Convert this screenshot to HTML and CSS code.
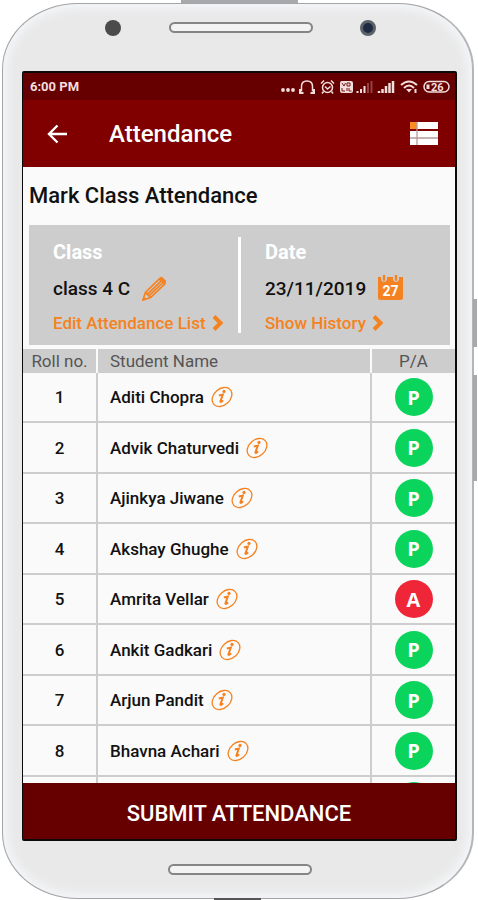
FILE: index.html
```html
<!DOCTYPE html>
<html lang="en">
<head>
    <meta charset="UTF-8">
    <meta name="viewport" content="width=device-width, initial-scale=1.0">
    <title>Attendance</title>
    <link rel="stylesheet" href="styles.css">
</head>
<body>

    <!-- shared icons -->
    <svg class="sprite" aria-hidden="true">
        <symbol id="info" viewBox="0 0 22 22">
            <ellipse cx="11" cy="11" rx="11" ry="8.2" transform="rotate(-42 11 11)" fill="none" stroke="currentColor" stroke-width="1.3"/>
            <path d="M7.800 9.500 11.800 8.600 9.400 15.500Q9.800 16.800 12.200 14.400" fill="none" stroke="currentColor" stroke-width="2"/>
            <circle cx="13" cy="5.400" r="1.600" fill="currentColor"/>
        </symbol>
        <symbol id="chevron" viewBox="0 0 12 16">
            <path d="M2 1.500 8.500 8 2 14.500" fill="none" stroke="currentColor" stroke-width="4"/>
        </symbol>
    </svg>

    <div class="phone">
        <span class="power-key"></span>
        <span class="side-key side-key-small"></span>
        <span class="side-key side-key-large"></span>
        <span class="base-port"></span>

        <div class="bezel-top">
            <span class="sensor"></span>
            <span class="speaker"></span>
            <span class="camera"></span>
        </div>

        <div class="screen">
            <div class="status-bar">
                <span class="time">6:00 PM</span>
                <svg class="status-icons" width="170" height="16" viewBox="0 0 170 16" fill="none" stroke="#f3dede" stroke-width="1.5">
                    <g fill="#f3dede" stroke="none">
                        <circle cx="3" cy="11" r="1.900"/><circle cx="8" cy="11" r="1.900"/><circle cx="13" cy="11" r="1.900"/>
                    </g>
                    <path d="M21.500 12.500V7.500Q21.500 2 27 2T32.500 7.500V12.500"/>
                    <path d="M20 10V14H23.500M34 10V14H30.500" stroke-width="2"/>
                    <circle cx="47.500" cy="8.500" r="5"/>
                    <path d="M41 4.500 44 1.500M54 4.500 51 1.500M43.500 12.500 42 14.500M51.500 12.500 53 14.500M45 7.500 47.500 10 50.500 7.500"/>
                    <rect x="60" y="2" width="13" height="12" rx="2" fill="#f3dede" stroke="none"/>
                    <path d="M62 4 64 7 65.500 4M67 4H70V7H67ZM62 9V12H65M67 9V12M69 9V12H71.500" stroke="#771818" stroke-width="1"/>
                    <path d="M77.500 14V12M81 14V10M84.500 14V7" stroke-width="2"/>
                    <path d="M88 14V4M91.500 14V2" stroke="#964040" stroke-width="2"/>
                    <path d="M99 14V12M102.500 14V10M106 14V7M109.500 14V4M113 14V2" stroke-width="2.500"/>
                    <path d="M121 6Q129 -1 137 6M124 9Q129 4 134 9" stroke-width="2"/>
                    <path d="M126 10H132L129 13.500Z" fill="#f3dede" stroke="none"/>
                    <path d="M135.500 10V14" stroke-width="2"/>
                    <rect x="144" y="2.500" width="25" height="10.500" rx="5.200"/>
                    <path d="M148 5.500V10" stroke-width="3"/>
                    <text class="battery-text" x="151" y="12">26</text>
                </svg>
            </div>

            <header class="app-bar">
                <button class="icon-btn back" type="button" aria-label="Back">
                    <svg width="20" height="20" viewBox="0 0 20 20" fill="none" stroke="#fff" stroke-width="2.400">
                        <path d="M20 10H2M10.500 1.500 2 10 10.500 18.500"/>
                    </svg>
                </button>
                <h1>Attendance</h1>
                <button class="icon-btn" type="button" aria-label="Attendance sheet">
                    <svg width="28" height="24" viewBox="0 0 28 24">
                        <path d="M7 0H28V7H7ZM0 9H28V23H0Z" fill="#fff"/>
                        <path d="M0 0H7V7H0Z" fill="#fb8c1e"/>
                        <path d="M7 0V23M0 16H28" stroke="#b79a9a" stroke-width="1.300"/>
                    </svg>
                </button>
            </header>

            <main class="content">
                <h2>Mark Class Attendance</h2>

                <section class="summary">
                    <div class="summary-item">
                        <h3>Class</h3>
                        <div class="value">
                            <span>class 4 C</span>
                            <button class="icon-btn" type="button" aria-label="Change class">
                                <svg width="25" height="25" viewBox="0 0 26 26" fill="none" stroke="#f58220" stroke-width="1.700">
                                    <path d="M1 25 3.500 17 18 3 23.500 8.500 9 22.500ZM3.500 17 9 22.500M6 18.500 19.500 5.500M7.800 20.200 21.500 7"/>
                                    <path d="M18 2Q19.500 0 21.500 1.500L24.500 4.500Q26 6.500 24 8.500Z" fill="#f58220" stroke="none"/>
                                    <path d="M1 25 2 21.500 4.500 24Z" fill="#f58220" stroke="none"/>
                                </svg>
                            </button>
                        </div>
                        <a href="#edit">Edit Attendance List <svg class="chevron"><use href="#chevron"/></svg></a>
                    </div>
                    <div class="summary-item">
                        <h3>Date</h3>
                        <div class="value">
                            <span>23/11/2019</span>
                            <button class="icon-btn" type="button" aria-label="Change date">
                                <svg width="25" height="26" viewBox="0 0 25 26">
                                    <path d="M0 2H25V23Q25 25 22.500 25H2.500Q0 25 0 23Z" fill="#f58220"/>
                                    <path d="M3 0H9V5Q6 9 3 5ZM15 0H21V5Q18 9 15 5Z" fill="#cdcdcd"/>
                                    <path d="M4.800 0H7.200V5Q6 7 4.800 5ZM16.800 0H19.200V5Q18 7 16.800 5Z" fill="#f58220"/>
                                    <text class="calendar-text" x="12.500" y="21">27</text>
                                </svg>
                            </button>
                        </div>
                        <a href="#history">Show History <svg class="chevron"><use href="#chevron"/></svg></a>
                    </div>
                </section>

                <div class="list">
                    <table>
                        <thead>
                            <tr>
                                <th class="roll">Roll no.</th>
                                <th class="name">Student Name</th>
                                <th class="mark">P/A</th>
                            </tr>
                        </thead>
                        <tbody id="students"></tbody>
                    </table>
                </div>
            </main>

            <button class="submit" type="button">SUBMIT ATTENDANCE</button>
        </div>

        <div class="bezel-bottom">
            <span class="speaker"></span>
        </div>
    </div>

    <script src="script.js"></script>
</body>
</html>
```

FILE: styles.css
```css
* {
    margin: 0;
    padding: 0;
    box-sizing: border-box;
}
body {
    height: 100vh;
    padding: 3px 4px 1px 2px;
    font-family: Roboto, "Liberation Sans", sans-serif;
    font-weight: 500;
    color: #111;
    background: #fff;
    overflow: hidden;
}
button {
    font: inherit;
    border: none;
    cursor: pointer;
}
.sprite {
    position: absolute;
    width: 0;
    height: 0;
}

/* phone body */
.phone {
    position: relative;
    height: 100%;
    padding: 0 15px 0 19px;
    display: flex;
    flex-direction: column;
    background: #e9e9e9;
    border: 1px solid #a3a5a7;
    border-right: 2px solid #b4b5b7;
    border-radius: 76px / 66px;
    box-shadow: inset 0 0 8px 5px #f3f5f8;
}
.power-key,
.side-key,
.base-port {
    position: absolute;
    background: #a9a9ab;
}
.power-key {
    top: -4px;
    left: 38%;
    width: 25%;
    height: 3px;
}
.side-key {
    right: -5px;
    width: 4px;
}
.side-key-small {
    top: 295px;
    height: 48px;
}
.side-key-large {
    top: 371px;
    height: 106px;
}
.base-port {
    bottom: -2px;
    left: 45%;
    width: 10%;
    height: 2px;
    background: #555;
}
.bezel-top {
    height: 67px;
    padding: 0 81px 20px 83px;
    display: flex;
    flex-shrink: 0;
    justify-content: space-between;
    align-items: center;
}
.bezel-bottom {
    height: 57px;
    display: flex;
    flex-shrink: 0;
    justify-content: center;
    align-items: center;
}
.sensor,
.camera {
    width: 16px;
    height: 16px;
    border-radius: 50%;
    background: #4b4b4b;
}
.camera {
    background: #1d2a42;
    border: 3px solid #5b6168;
}
.speaker {
    width: 144px;
    height: 11px;
    background: #f3f3f3;
    border: 2px solid #858585;
    border-radius: 6px;
}

/* screen */
.screen {
    flex: 1;
    min-height: 0;
    display: flex;
    flex-direction: column;
    background: #fafafa;
    border: 2px solid #0b0b0b;
    border-left-width: 1px;
    border-radius: 2px;
    overflow: hidden;
}
.status-bar {
    height: 27px;
    padding: 0 5px 0 7px;
    display: flex;
    flex-shrink: 0;
    justify-content: space-between;
    align-items: center;
    background: #660000;
}
.time {
    font-size: 13px;
    font-weight: 700;
    color: #f3dede;
}
.battery-text {
    font-size: 11px;
    font-weight: 700;
    fill: #f3dede;
    stroke: none;
}
.app-bar {
    height: 67px;
    padding: 0 17px 0 24px;
    display: flex;
    flex-shrink: 0;
    align-items: center;
    background: #800000;
    color: #fff;
}
.app-bar h1 {
    flex: 1;
    padding-left: 42px;
    font-size: 24px;
    font-weight: 500;
}
.icon-btn {
    display: flex;
    background: none;
    color: #f58220;
}
.content {
    flex: 1;
    min-height: 0;
    display: flex;
    flex-direction: column;
}
h2 {
    padding-left: 6px;
    font-size: 22px;
    font-weight: 500;
    line-height: 58px;
}

/* class and date card */
.summary {
    margin: 0 5px 4px 6px;
    padding: 12px 0;
    display: flex;
    background: #cdcdcd;
}
.summary-item {
    flex: 1;
    padding-left: 24px;
}
.summary-item + .summary-item {
    border-left: 3px solid #fff;
}
.summary-item h3 {
    font-size: 20px;
    font-weight: 700;
    line-height: 30px;
    color: #fff;
}
.summary-item .value {
    height: 42px;
    display: flex;
    align-items: center;
    gap: 12px;
    font-size: 19px;
}
.summary-item a {
    height: 24px;
    padding-top: 4px;
    display: flex;
    align-items: center;
    gap: 6px;
    font-size: 17px;
    color: #f58220;
    text-decoration: none;
    white-space: nowrap;
}
.chevron {
    width: 12px;
    height: 16px;
}
.calendar-text {
    font-size: 14px;
    font-weight: 700;
    fill: #fff;
    text-anchor: middle;
}

/* student list */
.list {
    flex: 1;
    min-height: 0;
    overflow: hidden;
}
table {
    width: 100%;
    table-layout: fixed;
    border-collapse: separate;
    border-spacing: 0;
}
th {
    height: 24px;
    font-size: 17px;
    font-weight: 400;
    color: #555;
    background: #cdcdcd;
}
th + th {
    border-left: 2px solid #fafafa;
}
.roll {
    width: 73px;
}
.name {
    padding-left: 12px;
    text-align: left;
}
.mark {
    width: 85px;
}
td {
    height: 50px;
    font-size: 17px;
    text-align: center;
    border-bottom: 2px solid #cdcdcd;
}
tr:nth-child(even) td {
    height: 51px;
}
td + td {
    border-left: 2px solid #cdcdcd;
}
td.name {
    text-align: left;
}
.student {
    display: flex;
    align-items: center;
    gap: 7px;
}
.info-icon {
    width: 22px;
    height: 22px;
}
.badge {
    width: 38px;
    height: 38px;
    display: block;
    margin: 0 auto;
    border-radius: 50%;
    font-family: "Open Sans", sans-serif;
    font-size: 20px;
    font-weight: 700;
    color: #fff;
    background: #0bd45c;
}
.badge.absent {
    background: #ee2637;
}
.submit {
    height: 56px;
    padding-top: 4px;
    flex-shrink: 0;
    font-size: 22px;
    color: #fff;
    background: #660000;
}
```

FILE: script.js
```js
const students = [
    "Aditi Chopra",
    "Advik Chaturvedi",
    "Ajinkya Jiwane",
    "Akshay Ghughe",
    "Amrita Vellar",
    "Ankit Gadkari",
    "Arjun Pandit",
    "Bhavna Achari",
    ""
];
const absent = ["Amrita Vellar"];

const tbody = document.getElementById("students");

students.forEach((name, i) => {
    const isAbsent = absent.includes(name);
    const mark = isAbsent ? "A" : "P";
    const row = document.createElement("tr");
    row.innerHTML = `
        <td class="roll">${name ? i + 1 : ""}</td>
        <td class="name">${name ? `
            <div class="student">
                <span>${name}</span>
                <button class="icon-btn" type="button" aria-label="About ${name}">
                    <svg class="info-icon"><use href="#info"/></svg>
                </button>
            </div>` : ""}
        </td>
        <td class="mark">
            <button class="badge${isAbsent ? " absent" : ""}" type="button">${name ? mark : ""}</button>
        </td>`;
    tbody.appendChild(row);
});

// Tap a badge to switch between present and absent
tbody.addEventListener("click", (e) => {
    const badge = e.target.closest(".badge");
    if (!badge) return;
    badge.textContent = badge.classList.toggle("absent") ? "A" : "P";
});
```
